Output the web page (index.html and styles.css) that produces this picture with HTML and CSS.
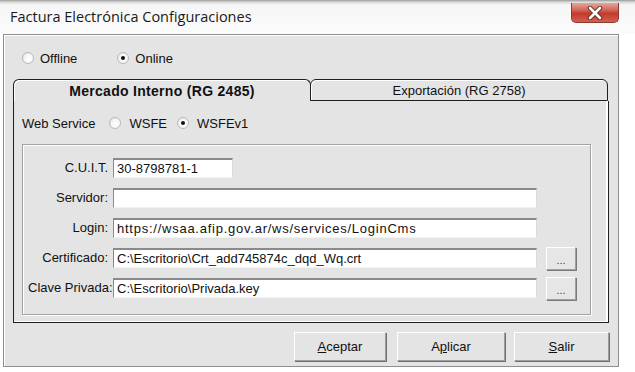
FILE: index.html
```html
<!DOCTYPE html>
<html lang="es">
<head>
<meta charset="utf-8">
<title>Factura Electrónica Configuraciones</title>
<link rel="stylesheet" href="styles.css">
</head>
<body>
<div class="window">
  <div class="titlebar">
    <span class="title">Factura Electrónica Configuraciones</span>
    <div class="close">
      <svg width="20" height="14" viewBox="0 0 20 14">
        <path d="M5 2 L15 12 M15 2 L5 12" stroke="#5a2a24" stroke-width="4.5" stroke-linecap="round"/>
        <path d="M5 2 L15 12 M15 2 L5 12" stroke="#ffffff" stroke-width="2.6" stroke-linecap="round"/>
      </svg>
    </div>
  </div>
  <div class="dialog">
    <div class="mode">
      <span class="radio"><span class="dot"></span>Offline</span>
      <span class="radio"><span class="dot checked"></span>Online</span>
    </div>
    <div class="tabs">
      <div class="tab active">Mercado Interno (RG 2485)</div>
      <div class="tab">Exportación (RG 2758)</div>
    </div>
    <div class="panel">
      <div class="ws">
        <span class="ws-label">Web Service</span>
        <span class="radio"><span class="dot"></span>WSFE</span>
        <span class="radio"><span class="dot checked"></span>WSFEv1</span>
      </div>
      <div class="group">
        <label class="lbl">C.U.I.T.</label>
        <div class="field short">30-8798781-1</div>
        <span></span>

        <label class="lbl">Servidor:</label>
        <div class="field"></div>
        <span></span>

        <label class="lbl">Login:</label>
        <div class="field url">https://wsaa.afip.gov.ar/ws/services/LoginCms</div>
        <span></span>

        <label class="lbl">Certificado:</label>
        <div class="field">C:\Escritorio\Crt_add745874c_dqd_Wq.crt</div>
        <div class="browse">...</div>

        <label class="lbl">Clave Privada:</label>
        <div class="field">C:\Escritorio\Privada.key</div>
        <div class="browse">...</div>
      </div>
    </div>
    <div class="actions">
      <div class="btn b-aceptar"><u>A</u>ceptar</div>
      <div class="btn b-aplicar">A<u>p</u>licar</div>
      <div class="btn b-salir"><u>S</u>alir</div>
    </div>
  </div>
</div>
</body>
</html>
```

FILE: styles.css
```css
* { box-sizing: border-box; }

html, body {
  margin: 0;
  padding: 0;
  background: #ffffff;
  width: 635px;
  height: 372px;
  overflow: hidden;
}

body {
  font-family: "Liberation Sans", Arial, sans-serif;
  font-size: 13px;
  color: #111;
}

.window {
  width: 635px;
  height: 372px;
}

.titlebar {
  height: 34px;
  display: flex;
  justify-content: space-between;
  align-items: flex-start;
  background: linear-gradient(#9a9a9a 0, #d8d8d8 2px, #f6f6f6 5px, #fbfbfb 100%);
  padding-right: 16px;
}

.title {
  font-family: "Open Sans", "Noto Sans", sans-serif;
  font-size: 14.5px;
  color: #1a1a1a;
  padding-left: 10px;
  padding-top: 7px;
}

.close {
  margin-top: 3px;
  width: 48px;
  height: 20px;
  border: 1px solid #8c3b33;
  border-top: none;
  border-radius: 0 0 5px 5px;
  background: linear-gradient(#e6a59c 0, #d56a5d 35%, #c43a2b 55%, #d0604f 100%);
  display: flex;
  align-items: center;
  justify-content: center;
}

.dialog {
  margin-left: 3px;
  width: 616px;
  height: 333px;
  border: 1px solid #8e8e8e;
  box-shadow: inset 1px 1px #ffffff;
  background: #e4e4e4;
  padding-left: 9px;
}

.mode {
  display: flex;
  height: 20px;
  align-items: center;
  margin-top: 13px;
  padding-left: 9px;
  gap: 40px;
}

.radio {
  display: inline-flex;
  align-items: center;
  gap: 6px;
}

.dot {
  width: 12px;
  height: 12px;
  border-radius: 50%;
  border: 1px solid #b9b9b9;
  background: radial-gradient(circle at 60% 60%, #ffffff 0, #f4f4f4 55%, #d8d8d8 100%);
  display: inline-flex;
  align-items: center;
  justify-content: center;
}

.dot.checked::after {
  content: "";
  width: 4px;
  height: 4px;
  border-radius: 50%;
  background: #111;
}

.tabs {
  display: flex;
  margin-top: 11px;
  height: 22px;
  width: 596px;
}

.tab {
  height: 22px;
  border: 1px solid #1e1e1e;
  border-radius: 6px 6px 0 0;
  display: flex;
  align-items: center;
  justify-content: center;
  background: #e4e4e4;
  box-shadow: inset 1px 1px #ffffff;
}

.tab.active {
  width: 298px;
  border-bottom: none;
  font-weight: bold;
  font-size: 14px;
  letter-spacing: 0.3px;
  padding-top: 1px;
}

.tab:not(.active) {
  width: 298px;
  margin-left: -1px;
  padding-top: 0;
}

.panel {
  width: 596px;
  height: 222px;
  border: 1px solid #1e1e1e;
  border-top: none;
  box-shadow: inset -2px -1px #ffffff, inset -1px 0 #a5a5a5;
  padding-left: 8px;
  padding-top: 14px;
}

.ws {
  display: flex;
  align-items: center;
  height: 16px;
}

.ws-label { margin-right: 14px; }

.ws .radio { gap: 8px; }

.ws .radio + .radio { margin-left: 10px; }

.group {
  margin-top: 13px;
  width: 569px;
  height: 171px;
  border: 1px solid #a3a3a3;
  box-shadow: inset 1px 1px #ffffff, 1px 1px #ffffff;
  padding: 13px 0 0 5px;
  display: grid;
  grid-template-columns: 79px 424px 30px;
  grid-auto-rows: 20px;
  column-gap: 6px;
  row-gap: 10px;
  align-items: start;
}

.lbl {
  text-align: right;
  line-height: 20px;
  white-space: nowrap;
  margin-right: -1px;
}

.field {
  height: 20px;
  background: #ffffff;
  border-top: 2px solid #8a8a8a;
  border-left: 1px solid #8a8a8a;
  border-right: 1px solid #dcdcdc;
  border-bottom: 1px solid #f2f2f2;
  padding-left: 3px;
  line-height: 17px;
  white-space: nowrap;
  overflow: hidden;
}

.field.url { letter-spacing: 0.75px; }

.field.short { width: 120px; }

.browse {
  width: 30px;
  height: 23px;
  margin-left: 3px;
  margin-top: -1px;
  border: 1px solid #a0a0a0;
  border-top-color: #ffffff;
  border-left-color: #ffffff;
  box-shadow: 1px 1px #7a7a7a;
  background: #e6e6e6;
  font-size: 11px;
  color: #444;
  text-align: center;
  line-height: 24px;
}

.actions {
  display: flex;
  margin-top: 9px;
  padding-left: 281px;
}

.btn {
  height: 29px;
  border: 1px solid #9e9e9e;
  border-top-color: #ffffff;
  border-left-color: #ffffff;
  box-shadow: 1px 1px #6f6f6f;
  background: #e4e4e4;
  display: flex;
  align-items: center;
  justify-content: center;
}

.b-aceptar { width: 92px; }
.b-aplicar { width: 108px; margin-left: 11px; }
.b-salir { width: 95px; margin-left: 9px; }
```
